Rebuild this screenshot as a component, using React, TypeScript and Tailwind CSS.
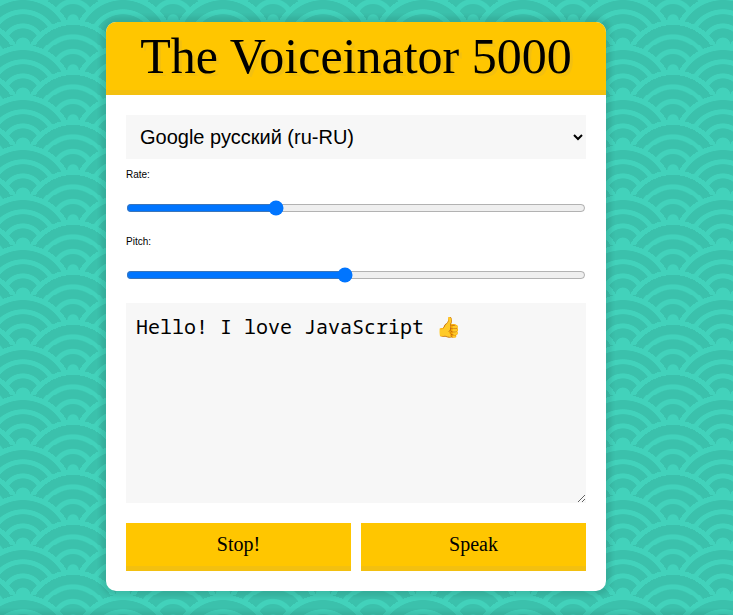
import { useState } from 'react';

const waves = [
  'bg-[#3bc1ac]',
  'bg-[image:radial-gradient(circle_at_100%_150%,#3bc1ac_24%,#42d2bb_25%,#42d2bb_28%,#3bc1ac_29%,#3bc1ac_36%,#42d2bb_36%,#42d2bb_40%,transparent_40%,transparent),radial-gradient(circle_at_0_150%,#3bc1ac_24%,#42d2bb_25%,#42d2bb_28%,#3bc1ac_29%,#3bc1ac_36%,#42d2bb_36%,#42d2bb_40%,transparent_40%,transparent),radial-gradient(circle_at_50%_100%,#42d2bb_10%,#3bc1ac_11%,#3bc1ac_23%,#42d2bb_24%,#42d2bb_30%,#3bc1ac_31%,#3bc1ac_43%,#42d2bb_44%,#42d2bb_50%,#3bc1ac_51%,#3bc1ac_63%,#42d2bb_64%,#42d2bb_71%,transparent_71%,transparent),radial-gradient(circle_at_100%_50%,#42d2bb_5%,#3bc1ac_6%,#3bc1ac_15%,#42d2bb_16%,#42d2bb_20%,#3bc1ac_21%,#3bc1ac_30%,#42d2bb_31%,#42d2bb_35%,#3bc1ac_36%,#3bc1ac_45%,#42d2bb_46%,#42d2bb_49%,transparent_50%,transparent),radial-gradient(circle_at_0_50%,#42d2bb_5%,#3bc1ac_6%,#3bc1ac_15%,#42d2bb_16%,#42d2bb_20%,#3bc1ac_21%,#3bc1ac_30%,#42d2bb_31%,#42d2bb_35%,#3bc1ac_36%,#3bc1ac_45%,#42d2bb_46%,#42d2bb_49%,transparent_50%,transparent)]',
  'bg-[length:100px_50px]',
  'bg-[position:-27px_-5px]',
].join(' ');

function Slider({ id, label, initial }: { id: string; label: string; initial: number }) {
  const [value, setValue] = useState(initial);
  return (
    <div className="flex flex-col gap-[10px]">
      <label htmlFor={id} className="text-[10px] leading-[11px]">
        {label}
      </label>
      <input
        id={id}
        name={id}
        type="range"
        min="0"
        max="200"
        value={value}
        onChange={(e) => setValue(Number(e.target.value))}
        className="block h-9 w-full"
      />
    </div>
  );
}

function ActionButton({ children }: { children: string }) {
  return (
    <button
      type="button"
      className="flex-1 cursor-pointer border-b-[5px] border-[#f3c010] bg-[#ffc600] p-[10px] font-['Liberation_Serif',serif] text-xl leading-[23px]"
    >
      {children}
    </button>
  );
}

export default function App() {
  const [message, setMessage] = useState('Hello! I love JavaScript 👍');
  return (
    <main
      className={`flex min-h-screen items-center justify-center pr-[21px] pb-[2px] font-['Liberation_Sans',Arial,sans-serif] text-black shadow-[inset_0_-8px_5px_-5px_rgba(0,0,0,0.1)] ${waves}`}
    >
      <div className="w-full max-w-[500px] overflow-hidden rounded-[10px] bg-white shadow-[0_0_5px_5px_rgba(0,0,0,0.1)]">
        <h1 className="border-b-[5px] border-[#f3c010] bg-[#ffc600] p-[5px] text-center font-['Liberation_Serif',serif] text-[50px] leading-[58px] font-thin [text-shadow:3px_3px_0_#f3c010]">
          The Voiceinator 5000
        </h1>
        <form className="flex flex-col gap-[10px] p-5">
          <select
            name="voice"
            aria-label="Voice"
            className="block h-11 w-full bg-[#f7f7f7] p-[10px] text-xl leading-6"
          >
            <option>Google русский (ru-RU)</option>
          </select>
          <Slider id="rate" label="Rate:" initial={64} />
          <Slider id="pitch" label="Pitch:" initial={95} />
          <textarea
            name="text"
            aria-label="Text to speak"
            value={message}
            onChange={(e) => setMessage(e.target.value)}
            className="mb-[10px] block h-[200px] w-full bg-[#f7f7f7] p-[10px] font-['Noto_Sans_Mono','DejaVu_Sans_Mono','Noto_Color_Emoji',monospace] text-xl leading-7"
          />
          <div className="flex gap-[10px]">
            <ActionButton>Stop!</ActionButton>
            <ActionButton>Speak</ActionButton>
          </div>
        </form>
      </div>
    </main>
  );
}
